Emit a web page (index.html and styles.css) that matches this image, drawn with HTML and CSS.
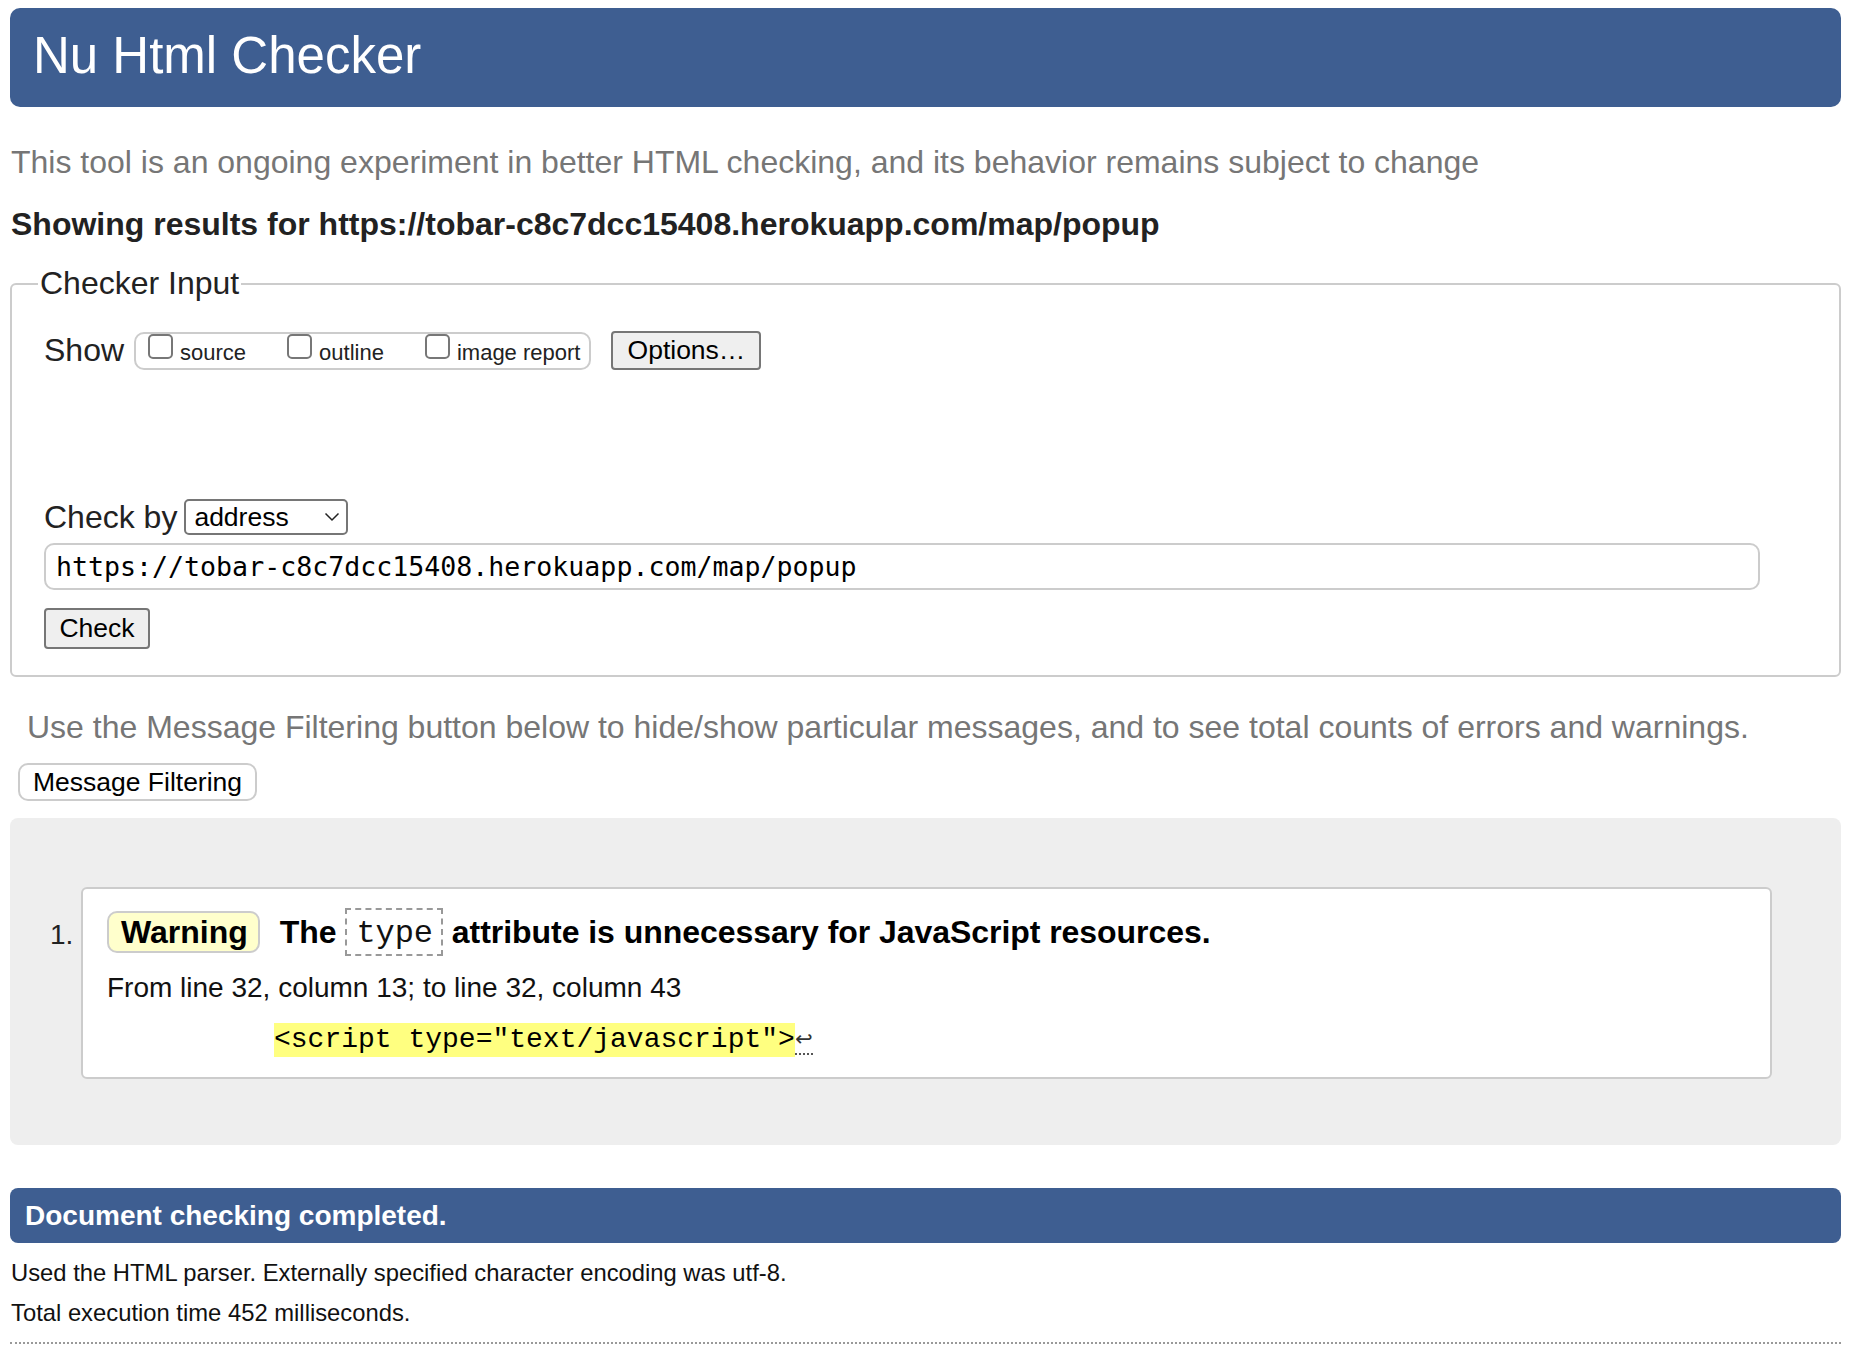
FILE: index.html
```html
<!DOCTYPE html>
<html lang="en">
<head>
<meta charset="utf-8">
<title>Nu Html Checker</title>
<link rel="stylesheet" href="styles.css">
</head>
<body>
<header class="masthead"><h1>Nu Html Checker</h1></header>
<p class="intro">This tool is an ongoing experiment in better HTML checking, and its behavior remains subject to change</p>
<p class="showing">Showing results for https://tobar-c8c7dcc15408.herokuapp.com/map/popup</p>
<form class="checker-form">
  <fieldset class="checker">
    <legend>Checker Input</legend>
    <div class="show-row">
      <span class="row-label">Show</span>
      <span class="opts">
        <label class="opt"><span class="cb"></span><span class="opt-text">source</span></label>
        <label class="opt"><span class="cb"></span><span class="opt-text">outline</span></label>
        <label class="opt"><span class="cb"></span><span class="opt-text">image report</span></label>
      </span>
      <button type="button" class="btn btn-options">Options…</button>
    </div>
    <div class="checkby-row">
      <span class="row-label">Check by</span>
      <span class="select-wrap">
        <span class="select">address</span>
        <svg class="chev" width="16" height="10" viewBox="0 0 16 10"><path d="M1.5 1.5 L8 8 L14.5 1.5" fill="none" stroke="#222" stroke-width="1.5"/></svg>
      </span>
    </div>
    <div class="url-input">https://tobar-c8c7dcc15408.herokuapp.com/map/popup</div>
    <button type="button" class="btn btn-check">Check</button>
  </fieldset>
</form>
<p class="filter-note">Use the Message Filtering button below to hide/show particular messages, and to see total counts of errors and warnings.</p>
<button type="button" class="filter-btn">Message Filtering</button>
<div class="results">
  <ol class="messages">
    <li class="msg-row">
      <span class="num">1.</span>
      <div class="msg">
        <p class="msg-title"><strong class="badge">Warning</strong><span class="msg-text">The <code class="attr">type</code> attribute is unnecessary for JavaScript resources.</span></p>
        <p class="location">From line 32, column 13; to line 32, column 43</p>
        <p class="extract"><b class="hl">&lt;script type="text/javascript"&gt;</b><span class="lf">↩</span></p>
      </div>
    </li>
  </ol>
</div>
<div class="done">Document checking completed.</div>
<p class="details">Used the HTML parser. Externally specified character encoding was utf-8.</p>
<p class="details">Total execution time 452 milliseconds.</p>
<hr class="dots">
</body>
</html>
```
FILE: styles.css
```css
html { background: #fff; }
body {
  margin: 0;
  padding: 8px 17px 0 10px;
  font-family: "Liberation Sans", Arial, Helvetica, sans-serif;
  color: #000;
}
.masthead {
  background: #3e5e91;
  border-radius: 10px;
  height: 99px;
  display: flex;
  align-items: center;
  padding-left: 23px;
  box-sizing: border-box;
}
.masthead h1 {
  margin: 0;
  font-weight: normal;
  font-size: 51px;
  line-height: 1;
  color: #fff;
  position: relative;
  top: -2px;
}
.intro {
  margin: 35px 0 0 1px;
  font-size: 32px;
  line-height: 40px;
  color: #767676;
}
.showing {
  margin: 22px 0 0 1px;
  font-size: 32px;
  line-height: 40px;
  font-weight: bold;
  color: #222;
}
.checker-form { margin: 0; }
.checker {
  margin: 21px 0 0 0;
  border: 2px solid #ccc;
  border-radius: 6px;
  padding: 0 32px 26px 32px;
  min-width: 0;
}
.checker legend {
  font-size: 32px;
  line-height: 37px;
  padding: 0 2px;
  margin-left: -6px;
  color: #222;
}
.show-row {
  display: flex;
  align-items: center;
  margin-top: 29px;
  height: 39px;
}
.row-label {
  font-size: 32px;
  line-height: 37px;
  color: #222;
}
.opts {
  display: flex;
  margin-left: 10px;
  border: 2px solid #ccc;
  border-radius: 10px;
  padding: 0 9px 2px 12px;
  height: 38px;
  box-sizing: border-box;
  gap: 41px;
}
.opt {
  display: flex;
  align-items: flex-start;
}
.cb {
  width: 25px;
  height: 25px;
  box-sizing: border-box;
  border: 2px solid #777;
  border-radius: 5px;
  background: #fff;
  margin-right: 7px;
}
.opt-text {
  font-size: 22px;
  line-height: 26px;
  margin-top: 6px;
  color: #222;
}
.btn {
  font-family: "Liberation Sans", Arial, sans-serif;
  font-size: 26.5px;
  color: #000;
  background: #efefef;
  border: 2px solid #767676;
  border-radius: 4px;
  padding: 0 14px;
  box-sizing: border-box;
}
.btn-options {
  margin-left: 20px;
  height: 39px;
  width: 150px;
}
.checkby-row {
  display: flex;
  align-items: center;
  margin-top: 129px;
  height: 36px;
}
.select-wrap {
  position: relative;
  margin-left: 7px;
  display: block;
}
.select {
  display: block;
  width: 164px;
  height: 36px;
  box-sizing: border-box;
  border: 2px solid #767676;
  border-radius: 5px;
  padding-left: 8px;
  font-size: 26.5px;
  line-height: 32px;
  color: #000;
  background: #fff;
}
.chev {
  position: absolute;
  right: 8px;
  top: 13px;
}
.url-input {
  margin-top: 8px;
  height: 47px;
  width: 1716px;
  box-sizing: border-box;
  border: 2px solid #ccc;
  border-radius: 10px;
  padding-left: 10px;
  font-family: "DejaVu Sans Mono", Menlo, monospace;
  font-size: 26.6px;
  line-height: 44px;
  color: #000;
  white-space: nowrap;
}
.btn-check {
  display: block;
  margin-top: 18px;
  height: 41px;
  width: 106px;
  padding: 0;
}
.filter-note {
  margin: 30px 0 0 17px;
  font-size: 32px;
  line-height: 40px;
  color: #767676;
}
.filter-btn {
  display: block;
  margin: 16px 0 0 8px;
  height: 38px;
  width: 239px;
  box-sizing: border-box;
  background: #fff;
  border: 2px solid #ccc;
  border-radius: 10px;
  font-family: "Liberation Sans", Arial, sans-serif;
  font-size: 26.5px;
  color: #000;
  padding: 0;
}
.results {
  margin-top: 17px;
  background: #eee;
  border-radius: 8px;
  padding: 69px 69px 66px 0;
}
.messages {
  list-style: none;
  margin: 0;
  padding: 0;
}
.msg-row {
  display: flex;
  align-items: flex-start;
}
.num {
  width: 71px;
  box-sizing: border-box;
  padding-left: 40px;
  font-size: 28px;
  line-height: 34px;
  margin-top: 31px;
  color: #222;
}
.msg {
  flex: 1;
  background: #fff;
  border: 2px solid #ccc;
  border-radius: 6px;
  padding: 19px 24px 20px 24px;
}
.msg p { margin: 0; }
.msg-title {
  display: flex;
  align-items: center;
  height: 48px;
}
.badge {
  display: block;
  background: #ffc;
  border: 2px solid #ccc;
  border-radius: 10px;
  height: 42px;
  box-sizing: border-box;
  padding: 0 10px 0 12px;
  font-size: 32px;
  line-height: 38px;
  font-weight: bold;
}
.msg-text {
  margin-left: 20px;
  font-size: 32px;
  font-weight: bold;
  line-height: 48px;
  display: flex;
  align-items: center;
  white-space: pre;
  letter-spacing: -0.05px;
}
.attr {
  display: inline-block;
  font-family: "Liberation Mono", "Courier New", monospace;
  font-weight: normal;
  font-size: 32px;
  line-height: 44px;
  border: 2px dashed #999;
  padding: 2px 8px 0 9px;
  height: 48px;
  box-sizing: border-box;
  margin: 0;
  color: #111;
}
.location {
  margin-top: 15px !important;
  font-size: 28px;
  line-height: 34px;
  color: #111;
}
.extract {
  margin-top: 18px !important;
  padding-left: 167px;
  height: 34px;
  display: flex;
  align-items: flex-start;
}
.hl {
  display: block;
  background: #ffff80;
  font-family: "Liberation Mono", "Courier New", monospace;
  font-weight: normal;
  font-size: 28px;
  line-height: 34px;
  color: #000;
  white-space: pre;
}
.lf {
  display: block;
  font-family: "DejaVu Sans", sans-serif;
  font-size: 21px;
  line-height: 32px;
  color: #333;
  border-bottom: 2px dotted #555;
  height: 32px;
  box-sizing: border-box;
}
.done {
  margin-top: 43px;
  background: #3e5e91;
  border-radius: 8px;
  height: 55px;
  padding-left: 15px;
  display: flex;
  align-items: center;
  color: #fff;
  font-size: 28px;
  font-weight: bold;
}
.details {
  margin: 15px 0 0 1px;
  font-size: 23.8px;
  line-height: 30px;
  color: #111;
}
.details + .details { margin-top: 10px; }
.dots {
  margin: 14px 0 0 0;
  border: 0;
  border-top: 2px dotted #999;
  height: 0;
}
```
